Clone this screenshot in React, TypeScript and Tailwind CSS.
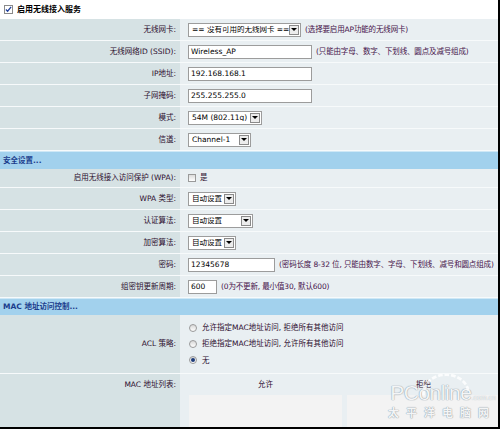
import type { ReactNode } from "react";

const labelCls =
  "flex w-[180px] shrink-0 items-center justify-end bg-[#d6e2e4] pr-[4px] text-[#2c0d2e]";
const valueCls = "flex flex-1 items-center gap-[4px] bg-[#e9eff2] pl-[8px]";

function Row({ label, h, children }: { label: string; h: string; children: ReactNode }) {
  return (
    <div className={`flex border-b border-[#f7fafb] ${h}`}>
      <div className={labelCls}>{label}</div>
      <div className={valueCls}>{children}</div>
    </div>
  );
}

function Select({ value, w }: { value: string; w: string }) {
  return (
    <div className={`flex h-[14px] items-center border border-[#9c9c9c] bg-white text-black ${w}`}>
      <span className="flex-1 overflow-hidden whitespace-nowrap pl-[3px] leading-none">{value}</span>
      <span className="mr-[1px] flex h-[10px] w-[10px] shrink-0 items-center justify-center border border-[#8a8a8a] bg-[#ececec]">
        <span className="border-x-[3px] border-t-[3px] border-x-transparent border-t-black" />
      </span>
    </div>
  );
}

function Input({ value, w }: { value: string; w: string }) {
  return (
    <div className={`flex h-[14px] items-center border border-[#9c9c9c] bg-white pl-[2px] leading-none text-black ${w}`}>
      {value}
    </div>
  );
}

function Hint({ children }: { children: ReactNode }) {
  return <span className="whitespace-nowrap tracking-[-0.15px] text-[#46124a]">{children}</span>;
}

function Radio({ on, label }: { on?: boolean; label: string }) {
  return (
    <div className="flex items-center gap-[5px]">
      <span className="flex h-[8px] w-[8px] items-center justify-center rounded-full border border-[#9a9a9a] bg-gradient-to-b from-[#d8d8d8] to-white">
        {on && <span className="h-[4px] w-[4px] rounded-full bg-[#1d3c7a]" />}
      </span>
      <span className="text-[#2c0d2e]">{label}</span>
    </div>
  );
}

function SectionHead({ title, h }: { title: string; h: string }) {
  return (
    <div className={`flex items-center border-t border-[#cfe8f6] bg-[#a2d1ed] pl-[3px] font-bold text-[#1b3d8c] ${h}`}>
      {title}
    </div>
  );
}

export default function App() {
  return (
    <div className="h-[429px] w-[500px] overflow-hidden border-r-2 border-b-2 border-black bg-white font-['DejaVu_Sans','Noto_Sans_CJK_SC',sans-serif] text-[7.5px]">
      {/* enable service */}
      <div className="flex h-[19px] items-center gap-[4px] bg-white pl-[4px]">
        <span className="flex h-[9px] w-[9px] items-center justify-center border border-[#8a8a8a] bg-white">
          <svg viewBox="0 0 8 8" className="h-[7px] w-[7px]">
            <path d="M1 4 L3 6 L7 1" fill="none" stroke="#1f3f9c" strokeWidth="1.4" />
          </svg>
        </span>
        <span className="text-[8px] font-bold text-black">启用无线接入服务</span>
      </div>

      <Row label="无线网卡:" h="h-[22px]">
        <Select value="== 没有可用的无线网卡 ==" w="w-[113px]" />
        <Hint>(选择要启用AP功能的无线网卡)</Hint>
      </Row>
      <Row label="无线网络ID (SSID):" h="h-[22px]">
        <Input value="Wireless_AP" w="w-[124px]" />
        <Hint>(只能由字母、数字、下划线、圆点及减号组成)</Hint>
      </Row>
      <Row label="IP地址:" h="h-[22px]">
        <Input value="192.168.168.1" w="w-[124px]" />
      </Row>
      <Row label="子网掩码:" h="h-[22px]">
        <Input value="255.255.255.0" w="w-[124px]" />
      </Row>
      <Row label="模式:" h="h-[22px]">
        <Select value="54M (802.11g)" w="w-[74px]" />
      </Row>
      <Row label="信道:" h="h-[22px]">
        <Select value="Channel-1" w="w-[63px]" />
      </Row>

      <SectionHead title="安全设置..." h="h-[18px]" />

      <Row label="启用无线接入访问保护 (WPA):" h="h-[19px]">
        <span className="h-[8px] w-[8px] border border-[#9a9a9a] bg-gradient-to-b from-[#dcdcdc] to-white" />
        <span className="text-[#2c0d2e]">是</span>
      </Row>
      <Row label="WPA 类型:" h="h-[22px]">
        <Select value="自动设置" w="w-[48px]" />
      </Row>
      <Row label="认证算法:" h="h-[22px]">
        <Select value="自动设置" w="w-[65px]" />
      </Row>
      <Row label="加密算法:" h="h-[22px]">
        <Select value="自动设置" w="w-[48px]" />
      </Row>
      <Row label="密码:" h="h-[22px]">
        <Input value="12345678" w="w-[87px]" />
        <Hint>(密码长度 8-32 位, 只能由数字、字母、下划线、减号和圆点组成)</Hint>
      </Row>
      <Row label="组密钥更新周期:" h="h-[22px]">
        <Input value="600" w="w-[29px]" />
        <Hint>(0为不更新, 最小值30, 默认600)</Hint>
      </Row>

      <SectionHead title="MAC 地址访问控制..." h="h-[17px]" />

      <div className="flex h-[59px] border-b border-[#f7fafb]">
        <div className={labelCls}>ACL 策略:</div>
        <div className="flex flex-1 flex-col justify-center gap-[5px] bg-[#e9eff2] pl-[9px]">
          <Radio label="允许指定MAC地址访问, 拒绝所有其他访问" />
          <Radio label="拒绝指定MAC地址访问, 允许所有其他访问" />
          <Radio on label="无" />
        </div>
      </div>

      <div className="relative flex h-[60px]">
        <div className="flex w-[180px] shrink-0 justify-end bg-[#d6e2e4] pr-[4px] pt-[5px] text-[#2c0d2e]">
          MAC 地址列表:
        </div>
        <div className="flex flex-1 flex-col bg-[#e9eff2] pl-[9px]">
          <div className="flex h-[21px] items-center text-[#2c0d2e]">
            <span className="w-[158px] pl-[69px]">允许</span>
            <span className="pl-[69px]">拒绝</span>
          </div>
          <div className="flex flex-1 gap-[5px]">
            <div className="w-[153px] bg-[#f3f3f3]" />
            <div className="flex-1 bg-[#f3f3f3]" />
          </div>
        </div>

        {/* watermark */}
        <div className="pointer-events-none absolute right-[2px] top-[2px] flex flex-col items-end">
          <svg viewBox="0 0 60 24" className="absolute right-[22px] top-[-2px] h-[24px] w-[56px]">
            <path d="M6 22 A24 20 0 0 1 54 18" fill="none" stroke="#ffffff" strokeOpacity="0.8" strokeWidth="3" strokeDasharray="5 2" />
          </svg>
          <div className="mt-[8px] flex items-baseline">
            <span className="font-['Liberation_Sans',sans-serif] text-[21px] leading-[18px] tracking-[-0.5px] text-white/90 [text-shadow:0_0_1px_#8d9aa4,0_0_1px_#8d9aa4]">
              PConline
            </span>
            <span className="font-['Liberation_Sans',sans-serif] text-[7px] text-white/90 [text-shadow:0_0_1px_#8d9aa4]">.com.cn</span>
          </div>
          <span className="mt-[2px] text-[11px] font-bold tracking-[7px] text-white/90 [text-shadow:0_0_1px_#8d9aa4,0_0_1px_#8d9aa4]">
            太平洋电脑网
          </span>
        </div>
      </div>
    </div>
  );
}
